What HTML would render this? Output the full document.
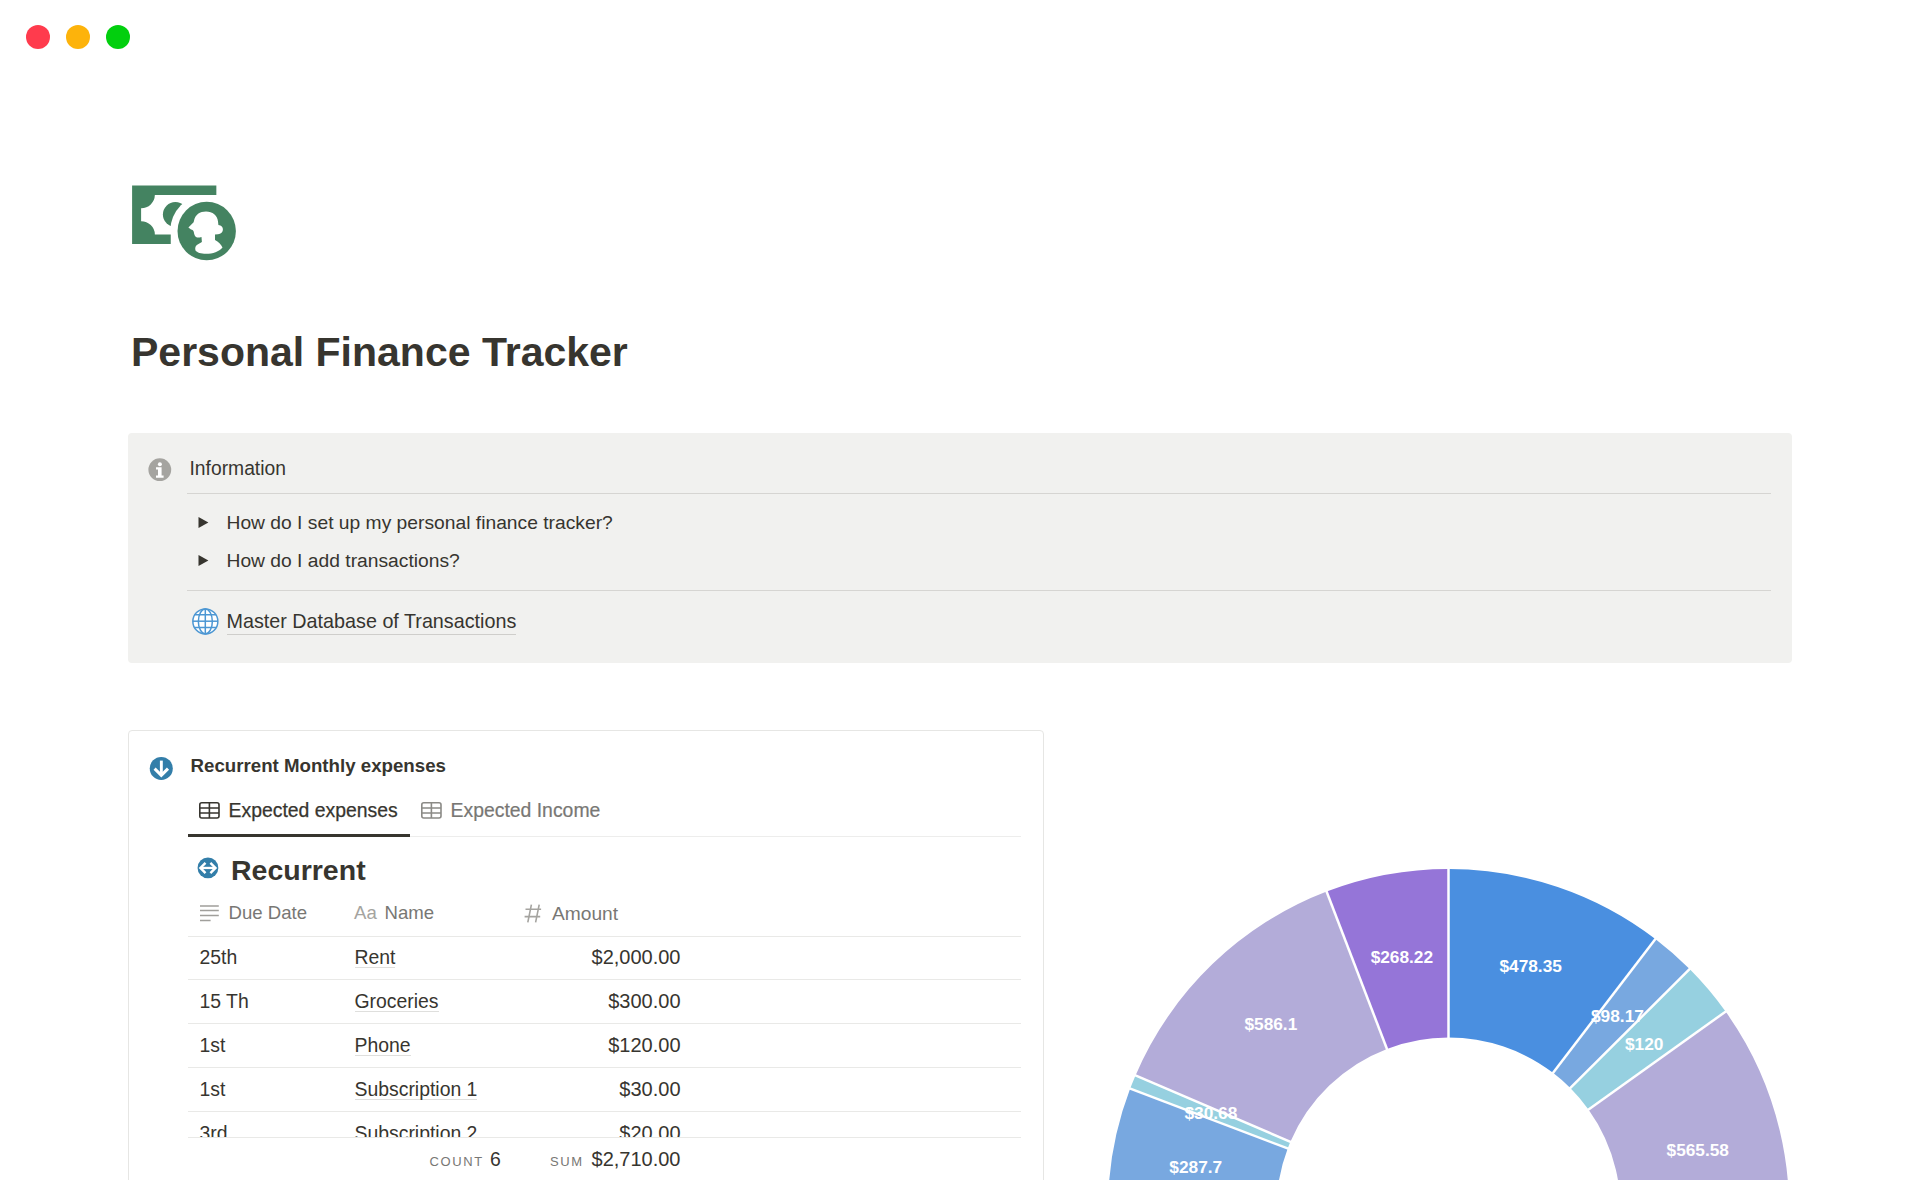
<!DOCTYPE html>
<html><head><meta charset="utf-8"><style>
html,body{margin:0;padding:0;background:#fff;width:1920px;height:1200px;overflow:hidden;position:relative}
body{font-family:"Liberation Sans",sans-serif;color:#37352f}
.t{position:absolute;white-space:nowrap}
</style></head><body>
<div style="position:absolute;left:26px;top:25px;width:24px;height:24px;border-radius:50%;background:#ff3b4d"></div>
<div style="position:absolute;left:66px;top:25px;width:24px;height:24px;border-radius:50%;background:#fdb30b"></div>
<div style="position:absolute;left:106px;top:25px;width:24px;height:24px;border-radius:50%;background:#02cf0e"></div>
<svg style="position:absolute;left:0;top:0" width="260" height="280" viewBox="0 0 260 280">
<defs><mask id="m1"><rect x="0" y="0" width="260" height="280" fill="#fff"/><circle cx="206.7" cy="231.05" r="36.5" fill="#000"/></mask></defs>
<g fill="#448361">
<path d="M132.1 185.5 H216.35 V195.1 H154.85 A13.7 13.3 0 0 1 141.1 208.2 V221.3 A13.7 13.3 0 0 1 154.85 234.4 H170.75 V244 H132.1 Z"/>
<circle mask="url(#m1)" cx="175.4" cy="214.5" r="12.5"/>
<circle cx="206.7" cy="231.05" r="29.2"/>
</g>
<path fill="#fff" d="M188.4 227.5 L193.6 222.3 L194 220.8 C195 214.5 200 211.4 206 211.4 C212.5 211.4 217.6 215.5 218 221.5 L218.4 224.9 C221.5 225.3 222.9 227 222.9 229.3 C222.9 232 221 234.25 218 234.25 L215 234.6 V239.9 C218.5 241.5 221 244.5 222.5 247.4 C219 251.5 213 253.75 206 253.75 C201 253.75 197 252.5 195.5 250.5 C194.8 248 195.5 246 197.2 244.8 L201.9 242.1 L201.5 236.9 C199.5 237.6 197.5 237.8 196.5 237.3 C194.8 236.5 194.2 234.5 193.8 232 C193.5 230.6 192.5 229.9 191 229.6 Z"/>
</svg>
<div class="t" style="left:131.00px;top:331.69px;font-size:41px;line-height:41px;font-weight:700;color:#37352f;">Personal Finance Tracker</div>
<div style="position:absolute;left:128px;top:433px;width:1664px;height:229.5px;background:#f1f1ef;border-radius:4px"></div>
<svg style="position:absolute;left:148px;top:458px" width="24" height="24" viewBox="0 0 24 24"><circle cx="11.8" cy="11.7" r="11.4" fill="#a5a4a0"/>
<circle cx="11.9" cy="6.3" r="2" fill="#fff"/><path fill="#fff" d="M8 9.3 H13.6 V17.6 H15.6 V19.8 H8 V17.6 H10 V11.5 H8 Z"/></svg>
<div class="t" style="left:189.50px;top:458.96px;font-size:19.3px;line-height:19.3px;font-weight:400;color:#37352f;">Information</div>
<div style="position:absolute;left:187px;top:492.5px;width:1584px;height:1px;background:#d6d5d2"></div>
<svg style="position:absolute;left:198px;top:516.7px" width="12" height="12" viewBox="0 0 12 12"><path d="M0.5 0 L10.4 5.5 L0.5 11 Z" fill="#37352f"/></svg>
<div class="t" style="left:226.50px;top:512.90px;font-size:19.25px;line-height:19.25px;font-weight:400;color:#37352f;">How do I set up my personal finance tracker?</div>
<svg style="position:absolute;left:198px;top:555.2px" width="12" height="12" viewBox="0 0 12 12"><path d="M0.5 0 L10.4 5.5 L0.5 11 Z" fill="#37352f"/></svg>
<div class="t" style="left:226.50px;top:551.40px;font-size:19.25px;line-height:19.25px;font-weight:400;color:#37352f;">How do I add transactions?</div>
<div style="position:absolute;left:187px;top:590px;width:1584px;height:1px;background:#d6d5d2"></div>
<svg style="position:absolute;left:190px;top:606px" width="30" height="30" viewBox="0 0 30 30" fill="none" stroke="#4d97d3" stroke-width="1.5">
<circle cx="15.35" cy="15.4" r="12.5" fill="#fff"/>
<ellipse cx="15.35" cy="15.4" rx="7" ry="12.5"/>
<line x1="15.3" y1="2.6" x2="15.3" y2="27.6"/>
<line x1="2.85" y1="15.2" x2="27.85" y2="15.2"/>
<path d="M4.6 8.7 H26.1 M4.6 21.5 H26.1"/>
</svg>
<div class="t" style="left:226.50px;top:607.96px;font-size:19.75px;line-height:26px;font-weight:400;color:#37352f;border-bottom:1px solid #cfcecb;">Master Database of Transactions</div>
<div style="position:absolute;left:128px;top:730px;width:916px;height:460px;border:1px solid #e6e6e4;border-radius:4px;box-sizing:border-box"></div>
<div style="position:absolute;left:0;top:1180px;width:1920px;height:20px;background:#fff"></div>
<svg style="position:absolute;left:149px;top:756px" width="25" height="25" viewBox="0 0 25 25"><circle cx="12.27" cy="12.47" r="11.53" fill="#337ea9"/>
<path d="M12.35 4.6 V18" stroke="#fff" stroke-width="2.9" fill="none"/><path d="M5.6 12.6 L12.3 19.3 L19 12.6" stroke="#fff" stroke-width="3" fill="none"/></svg>
<div class="t" style="left:190.50px;top:757.27px;font-size:18.7px;line-height:18.7px;font-weight:700;color:#37352f;">Recurrent Monthly expenses</div>
<svg style="position:absolute;left:199px;top:802px" width="22" height="18" viewBox="0 0 22 18" fill="none" stroke="#37352f" stroke-width="1.6">
<rect x="0.8" y="0.8" width="19.2" height="15.2" rx="2"/><path d="M0.8 6 H20 M0.8 11 H20 M10.4 0.8 V16"/></svg>
<div class="t" style="left:228.50px;top:800.98px;font-size:19.4px;line-height:19.4px;font-weight:400;color:#37352f;-webkit-text-stroke:0.25px #37352f;">Expected expenses</div>
<svg style="position:absolute;left:421px;top:802px" width="22" height="18" viewBox="0 0 22 18" fill="none" stroke="#8b8a86" stroke-width="1.6">
<rect x="0.8" y="0.8" width="19.2" height="15.2" rx="2"/><path d="M0.8 6 H20 M0.8 11 H20 M10.4 0.8 V16"/></svg>
<div class="t" style="left:450.50px;top:800.98px;font-size:19.4px;line-height:19.4px;font-weight:400;color:#787774;-webkit-text-stroke:0.2px #787774;">Expected Income</div>
<div style="position:absolute;left:188px;top:835.5px;width:833px;height:1px;background:#ededec"></div>
<div style="position:absolute;left:188px;top:833.75px;width:222px;height:2.75px;background:#37352f"></div>
<svg style="position:absolute;left:196px;top:856px" width="24" height="24" viewBox="0 0 24 24"><circle cx="11.95" cy="11.95" r="10.4" fill="#337ea9"/>
<path d="M6 11.95 H18" stroke="#fff" stroke-width="2.3" fill="none"/><path d="M9.5 6.8 L4.4 11.95 L9.5 17.1 M14.4 6.8 L19.5 11.95 L14.4 17.1" stroke="#fff" stroke-width="2.4" fill="none"/></svg>
<div class="t" style="left:231.00px;top:856.47px;font-size:28.5px;line-height:28.5px;font-weight:700;color:#37352f;">Recurrent</div>
<svg style="position:absolute;left:199px;top:904px" width="22" height="18" viewBox="0 0 22 18" stroke="#a09f9b" stroke-width="1.5"><path d="M1 1.9 H19.8 M1 6.6 H19.8 M1 11.4 H19.8 M1 16.4 H11.6"/></svg>
<div class="t" style="left:228.50px;top:904.01px;font-size:18.6px;line-height:18.6px;font-weight:400;color:#787774;">Due Date</div>
<div class="t" style="left:354.00px;top:904.01px;font-size:18.6px;line-height:18.6px;font-weight:400;color:#a5a4a0;">Aa</div>
<div class="t" style="left:384.50px;top:904.01px;font-size:18.6px;line-height:18.6px;font-weight:400;color:#787774;">Name</div>
<svg style="position:absolute;left:520px;top:900px" width="26" height="26" viewBox="520 900 26 26" stroke="#a5a4a0" stroke-width="1.6" fill="none"><path d="M531.4 904.6 L527.8 922.3 M539.2 904.6 L535.6 922.3 M525.5 909.3 H541.1 M524.6 916.6 H540.2"/></svg>
<div class="t" style="left:552.00px;top:903.50px;font-size:19.2px;line-height:19.2px;font-weight:400;color:#787774;">Amount</div>
<div style="position:absolute;left:188px;top:935.5px;width:833px;height:1px;background:#e9e9e7"></div>
<div style="position:absolute;left:0;top:936px;width:1920px;height:200.5px;overflow:hidden">
<div class="t" style="left:199.50px;top:11.78px;font-size:19.4px;line-height:19.4px;font-weight:400;color:#37352f;">25th</div>
<div class="t" style="left:354.50px;top:11.48px;font-size:19.4px;line-height:20px;font-weight:400;color:#37352f;border-bottom:1px solid #dfdfdd;">Rent</div>
<div class="t" style="right:1239.50px;top:11.27px;font-size:20px;line-height:20px;font-weight:400;color:#37352f;">$2,000.00</div>
<div style="position:absolute;left:188px;top:43.0px;width:833px;height:1px;background:#e9e9e7"></div>
<div class="t" style="left:199.50px;top:55.78px;font-size:19.4px;line-height:19.4px;font-weight:400;color:#37352f;">15 Th</div>
<div class="t" style="left:354.50px;top:55.48px;font-size:19.4px;line-height:20px;font-weight:400;color:#37352f;border-bottom:1px solid #dfdfdd;">Groceries</div>
<div class="t" style="right:1239.50px;top:55.27px;font-size:20px;line-height:20px;font-weight:400;color:#37352f;">$300.00</div>
<div style="position:absolute;left:188px;top:87.0px;width:833px;height:1px;background:#e9e9e7"></div>
<div class="t" style="left:199.50px;top:99.78px;font-size:19.4px;line-height:19.4px;font-weight:400;color:#37352f;">1st</div>
<div class="t" style="left:354.50px;top:99.48px;font-size:19.4px;line-height:20px;font-weight:400;color:#37352f;border-bottom:1px solid #dfdfdd;">Phone</div>
<div class="t" style="right:1239.50px;top:99.27px;font-size:20px;line-height:20px;font-weight:400;color:#37352f;">$120.00</div>
<div style="position:absolute;left:188px;top:131.0px;width:833px;height:1px;background:#e9e9e7"></div>
<div class="t" style="left:199.50px;top:143.78px;font-size:19.4px;line-height:19.4px;font-weight:400;color:#37352f;">1st</div>
<div class="t" style="left:354.50px;top:143.48px;font-size:19.4px;line-height:20px;font-weight:400;color:#37352f;border-bottom:1px solid #dfdfdd;">Subscription 1</div>
<div class="t" style="right:1239.50px;top:143.27px;font-size:20px;line-height:20px;font-weight:400;color:#37352f;">$30.00</div>
<div style="position:absolute;left:188px;top:175.0px;width:833px;height:1px;background:#e9e9e7"></div>
<div class="t" style="left:199.50px;top:187.78px;font-size:19.4px;line-height:19.4px;font-weight:400;color:#37352f;">3rd</div>
<div class="t" style="left:354.50px;top:187.48px;font-size:19.4px;line-height:20px;font-weight:400;color:#37352f;border-bottom:1px solid #dfdfdd;">Subscription 2</div>
<div class="t" style="right:1239.50px;top:187.27px;font-size:20px;line-height:20px;font-weight:400;color:#37352f;">$20.00</div>
<div style="position:absolute;left:188px;top:219.0px;width:833px;height:1px;background:#e9e9e7"></div>
</div>
<div style="position:absolute;left:188px;top:1136.5px;width:833px;height:1px;background:#e9e9e7"></div>
<div class="t" style="left:429.50px;top:1154.50px;font-size:13px;line-height:13px;font-weight:400;color:#787774;letter-spacing:1.6px;">COUNT</div>
<div class="t" style="left:490.00px;top:1149.58px;font-size:19.4px;line-height:19.4px;font-weight:400;color:#37352f;">6</div>
<div class="t" style="left:550.00px;top:1154.50px;font-size:13px;line-height:13px;font-weight:400;color:#787774;letter-spacing:1.6px;">SUM</div>
<div class="t" style="right:1239.50px;top:1149.07px;font-size:20px;line-height:20px;font-weight:400;color:#37352f;">$2,710.00</div>
<svg style="position:absolute;left:0;top:0" width="1920" height="1180" viewBox="0 0 1920 1180">
<path fill="#4a8fe0" d="M1448.50 869.00 A340.5 340.5 0 0 1 1655.34 939.03 L1552.99 1072.87 A172 172 0 0 0 1448.50 1037.50 Z"/>
<path fill="#78a8e0" d="M1655.34 939.03 A340.5 340.5 0 0 1 1689.62 969.08 L1570.30 1088.06 A172 172 0 0 0 1552.99 1072.87 Z"/>
<path fill="#96d0e0" d="M1689.62 969.08 A340.5 340.5 0 0 1 1725.60 1011.62 L1588.47 1109.54 A172 172 0 0 0 1570.30 1088.06 Z"/>
<path fill="#b3acd9" d="M1725.60 1011.62 A340.5 340.5 0 0 1 1785.09 1260.98 L1618.52 1235.51 A172 172 0 0 0 1588.47 1109.54 Z"/>
<path fill="#9575d8" d="M1326.62 891.56 A340.5 340.5 0 0 1 1448.50 869.00 L1448.50 1037.50 A172 172 0 0 0 1386.93 1048.90 Z"/>
<path fill="#b3acd9" d="M1135.52 1075.41 A340.5 340.5 0 0 1 1326.62 891.56 L1386.93 1048.90 A172 172 0 0 0 1290.40 1141.76 Z"/>
<path fill="#96d0e0" d="M1130.18 1088.62 A340.5 340.5 0 0 1 1135.52 1075.41 L1290.40 1141.76 A172 172 0 0 0 1287.70 1148.44 Z"/>
<path fill="#78a8e0" d="M1108.15 1219.63 A340.5 340.5 0 0 1 1130.18 1088.62 L1287.70 1148.44 A172 172 0 0 0 1276.58 1214.62 Z"/>
<text x="1530.67" y="972.28" text-anchor="middle" font-family="Liberation Sans" font-weight="700" font-size="17.3" fill="#fff">$478.35</text>
<text x="1617.44" y="1022.33" text-anchor="middle" font-family="Liberation Sans" font-weight="700" font-size="17.3" fill="#fff">$98.17</text>
<text x="1644.15" y="1049.52" text-anchor="middle" font-family="Liberation Sans" font-weight="700" font-size="17.3" fill="#fff">$120</text>
<text x="1697.76" y="1155.54" text-anchor="middle" font-family="Liberation Sans" font-weight="700" font-size="17.3" fill="#fff">$565.58</text>
<text x="1401.86" y="963.03" text-anchor="middle" font-family="Liberation Sans" font-weight="700" font-size="17.3" fill="#fff">$268.22</text>
<text x="1270.84" y="1030.33" text-anchor="middle" font-family="Liberation Sans" font-weight="700" font-size="17.3" fill="#fff">$586.1</text>
<text x="1210.90" y="1119.04" text-anchor="middle" font-family="Liberation Sans" font-weight="700" font-size="17.3" fill="#fff">$30.68</text>
<text x="1195.80" y="1172.51" text-anchor="middle" font-family="Liberation Sans" font-weight="700" font-size="17.3" fill="#fff">$287.7</text>
<line x1="1448.50" y1="1039.50" x2="1448.50" y2="867.00" stroke="#fff" stroke-width="2.5"/>
<line x1="1551.77" y1="1074.46" x2="1656.56" y2="937.44" stroke="#fff" stroke-width="2.5"/>
<line x1="1568.88" y1="1089.47" x2="1691.04" y2="967.67" stroke="#fff" stroke-width="2.5"/>
<line x1="1586.84" y1="1110.70" x2="1727.22" y2="1010.45" stroke="#fff" stroke-width="2.5"/>
<line x1="1616.55" y1="1235.20" x2="1787.06" y2="1261.28" stroke="#fff" stroke-width="2.5"/>
<line x1="1387.65" y1="1050.76" x2="1325.90" y2="889.69" stroke="#fff" stroke-width="2.5"/>
<line x1="1292.24" y1="1142.55" x2="1133.68" y2="1074.62" stroke="#fff" stroke-width="2.5"/>
<line x1="1289.57" y1="1149.15" x2="1128.31" y2="1087.91" stroke="#fff" stroke-width="2.5"/>
<line x1="1278.58" y1="1214.56" x2="1106.15" y2="1219.69" stroke="#fff" stroke-width="2.5"/>
</svg>
</body></html>
